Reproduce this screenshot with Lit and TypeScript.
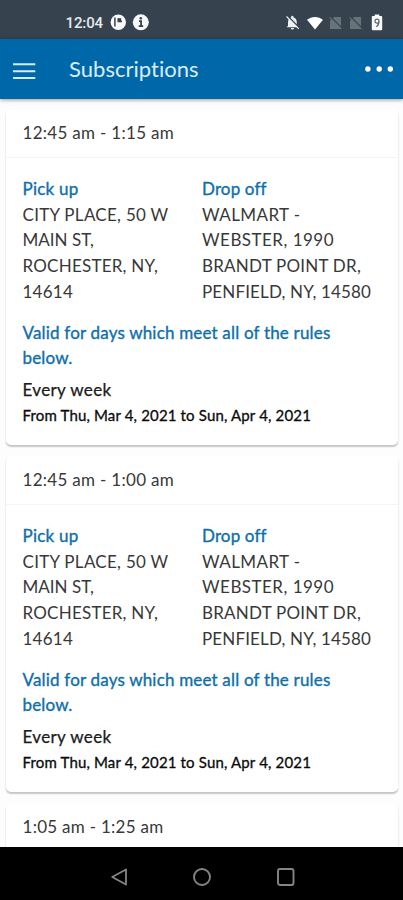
import { LitElement, html, css, svg, nothing } from "lit";
import { customElement, property } from "lit/decorators.js";

type Line = [text: string, width: number];

interface Trip {
  pickup: Line[];
  dropoff: Line[];
  rule: Line[];
  repeat: Line;
  range: Line;
}

interface Subscription {
  time: Line;
  trip?: Trip;
}

const trip: Trip = {
  pickup: [["CITY PLACE, 50 W", 146], ["MAIN ST,", 71.5], ["ROCHESTER, NY,", 135.5], ["14614", 50.5]],
  dropoff: [["WALMART -", 98.5], ["WEBSTER, 1990", 132], ["BRANDT POINT DR,", 159], ["PENFIELD, NY, 14580", 169]],
  rule: [["Valid for days which meet all of the rules", 308], ["below.", 50]],
  repeat: ["Every week", 89],
  range: ["From Thu, Mar 4, 2021 to Sun, Apr 4, 2021", 288.5],
};

const subscriptions: Subscription[] = [
  { time: ["12:45 am - 1:15 am", 151.5], trip },
  { time: ["12:45 am - 1:00 am", 151.5], trip },
  { time: ["1:05 am - 1:25 am", 141] },
];

/** One line of text, tracked so that it spans the given width. */
@customElement("text-line")
class TextLine extends LitElement {
  @property() text = "";
  @property({ type: Number }) width = 0;

  static styles = css`
    :host { display: block; white-space: pre; }
    span { display: inline-block; }
  `;

  render() {
    return html`<span>${this.text}</span>`;
  }

  updated() {
    const span = this.renderRoot.querySelector("span")!;
    span.style.letterSpacing = "0px";
    const natural = span.getBoundingClientRect().width;
    span.style.letterSpacing = `${(this.width - natural) / this.text.length}px`;
  }
}

const line = ([text, width]: Line) => html`<text-line .text=${text} .width=${width}></text-line>`;

@customElement("subscription-card")
class SubscriptionCard extends LitElement {
  @property({ attribute: false }) item!: Subscription;

  static styles = css`
    :host {
      display: block;
      flex: none;
      height: 336px;
      box-sizing: border-box;
      background: #fff;
      border-radius: 5px;
      box-shadow: 0 2px 1.5px rgba(0, 0, 0, 0.2), 0 1px 3px rgba(0, 0, 0, 0.05);
      font-size: 17px;
      line-height: 25.7px;
      color: #383838;
    }
    .time { height: 49px; box-sizing: border-box; padding: 11px 16px 0 16.5px; border-bottom: 1px solid #f4f4f4; }
    .body { padding: 18px 16px 0 16.5px; }
    .places { display: grid; grid-template-columns: 179.5px 1fr; }
    .label, .rule { color: #0f6fa9; -webkit-text-stroke: 0.35px #0f6fa9; }
    .rule { margin-top: 15.2px; }
    .repeat { margin-top: 6.3px; color: #1a1a1a; -webkit-text-stroke: 0.25px #1a1a1a; }
    .range { font-size: 15px; color: #0a0a0a; -webkit-text-stroke: 0.3px #0a0a0a; }
  `;

  renderTrip(t: Trip) {
    return html`
      <div class="body">
        <div class="places">
          <div><div class="label">${line(["Pick up", 56])}</div>${t.pickup.map(line)}</div>
          <div><div class="label">${line(["Drop off", 64])}</div>${t.dropoff.map(line)}</div>
        </div>
        <div class="rule">${t.rule.map(line)}</div>
        <div class="repeat">${line(t.repeat)}</div>
        <div class="range">${line(t.range)}</div>
      </div>
    `;
  }

  render() {
    const s = this.item;
    return html`
      <div class="time">${line(s.time)}</div>
      ${s.trip ? this.renderTrip(s.trip) : nothing}
    `;
  }
}

const noSim = svg`<path d="M1 5 5 1H12V13H1Z" fill="#68727a"/><path d="M1.6 .8 13.4 12.6" stroke="#36424d" stroke-width="1.3"/><path d="M.6 1.4 12.4 13.2" stroke="#68727a" stroke-width="1.1"/>`;

@customElement("app-root")
class AppRoot extends LitElement {
  static styles = css`
    :host {
      display: flex;
      flex-direction: column;
      width: 403px;
      height: 900px;
      overflow: hidden;
      background: #fdfdfd;
      font-family: Lato, "Noto Sans", sans-serif;
    }
    svg { display: block; flex: none; }
    .status {
      flex: none;
      height: 39px;
      box-sizing: border-box;
      padding: 6px 17px 0 65.5px;
      display: flex;
      align-items: center;
      background: #36424d;
      color: #e6eaed;
      font: 500 15px/18px Roboto, sans-serif;
    }
    .left, .right { display: flex; align-items: center; }
    .left { gap: 7px; }
    .right { margin-left: auto; gap: 6.5px; }
    .bar {
      flex: none;
      height: 60px;
      box-sizing: border-box;
      padding: 3px 9px 0 13px;
      display: flex;
      align-items: center;
      background: #0068a8;
      box-shadow: 0 1px 4px rgba(0, 0, 0, 0.4);
      z-index: 1;
    }
    .title { margin: -3px 0 0 33px; color: #d9edfa; font-size: 22px; line-height: 30px; }
    .more { margin: -3px -1px 0 auto; }
    .list {
      flex: 1;
      min-height: 0;
      overflow: hidden;
      display: flex;
      flex-direction: column;
      gap: 11px;
      padding: 10px 5px 0 6px;
    }
    .nav {
      flex: none;
      height: 53px;
      box-sizing: border-box;
      padding: 7px 0 0 108.5px;
      display: flex;
      align-items: center;
      gap: 64px;
      background: #000;
    }
  `;

  render() {
    return html`
      <div class="status">
        <div class="left">
          ${line(["12:04", 37.5])}
          <svg width="39" height="17" viewBox="0 0 39 17">
            <circle cx="8.3" cy="8.3" r="7.7" fill="#f7f9fa"/>
            <path d="M4.9 3.6V12.4M8.2 4.2V7.6H12" fill="none" stroke="#36424d" stroke-width="1.5"/>
            <path d="M8.2 4.2H11.2V7.6H8.2Z" fill="#36424d"/>
            <circle cx="30.8" cy="8.3" r="8" fill="#f7f9fa"/>
            <path d="M29 7.2H31.1V12M28.7 12.2H33.2" fill="none" stroke="#36424d" stroke-width="1.8"/>
            <circle cx="30.8" cy="4.2" r="1.3" fill="#36424d"/>
          </svg>
        </div>
        <div class="right">
          <svg width="15" height="15" viewBox="0 0 15 15">
            <path d="M3 11V7.2C3 4.7 4.3 3 6.2 2.5V1.8A1.1 1.1 0 0 1 8.5 1.8V2.5C10.5 3 11.8 4.7 11.8 7.2V10.2L13.5 12.2H1.4Z M5.8 13H9A1.6 1.6 0 0 1 5.8 13Z" fill="#edf0f2"/>
            <path d="M2.6 1 14.4 12.8" stroke="#36424d" stroke-width="1.4"/>
            <path d="M1.5 1.5 13.8 13.8" stroke="#edf0f2" stroke-width="1.1"/>
          </svg>
          <svg width="16" height="14" viewBox="0 0 16 14"><path d="M0 3.8C4.5 -.1 11.5 -.1 16 3.8L8 13.5Z" fill="#fff"/></svg>
          <svg width="13" height="14" viewBox="0 0 13 14">${noSim}</svg>
          <svg width="13" height="14" viewBox="0 0 13 14">${noSim}</svg>
          <svg width="18" height="17" viewBox="0 0 18 17">
            <path d="M6.7 2V.6H11.3V2H13.2Q14.2 2 14.2 3V15.3Q14.2 16.3 13.2 16.3H4.8Q3.8 16.3 3.8 15.3V3Q3.8 2 4.8 2Z" fill="#f7f9fa"/>
            <path d="M11 7.2A2 2 0 1 1 7 7.2 2 2 0 1 1 11 7.2C11 10.2 10.2 11.7 8.3 12.7" fill="none" stroke="#59636b" stroke-width="1.2"/>
          </svg>
        </div>
      </div>
      <div class="bar">
        <svg width="23" height="18" viewBox="0 0 23 18"><path d="M0 2.3H22.3M0 9.2H22.3M0 16H22.3" stroke="#d5ebf8" stroke-width="2"/></svg>
        <div class="title">${line(["Subscriptions", 130])}</div>
        <svg class="more" width="30" height="8" viewBox="0 0 30 8" fill="#fff"><circle cx="2.9" cy="4" r="2.7"/><circle cx="14.2" cy="4" r="2.7"/><circle cx="25.3" cy="4" r="2.7"/></svg>
      </div>
      <div class="list">
        ${subscriptions.map((s) => html`<subscription-card .item=${s}></subscription-card>`)}
      </div>
      <div class="nav">
        <svg width="20" height="20" viewBox="0 0 20 20"><path d="M17 2.5V17.5L3.2 10Z" fill="none" stroke="#858585" stroke-width="1.8" stroke-linejoin="round"/></svg>
        <svg width="20" height="20" viewBox="0 0 20 20"><circle cx="9" cy="10" r="8" fill="none" stroke="#858585" stroke-width="1.9"/></svg>
        <svg width="20" height="20" viewBox="0 0 20 20"><rect x="1" y="2" width="15.5" height="16" rx="2" fill="none" stroke="#858585" stroke-width="1.9"/></svg>
      </div>
    `;
  }
}
